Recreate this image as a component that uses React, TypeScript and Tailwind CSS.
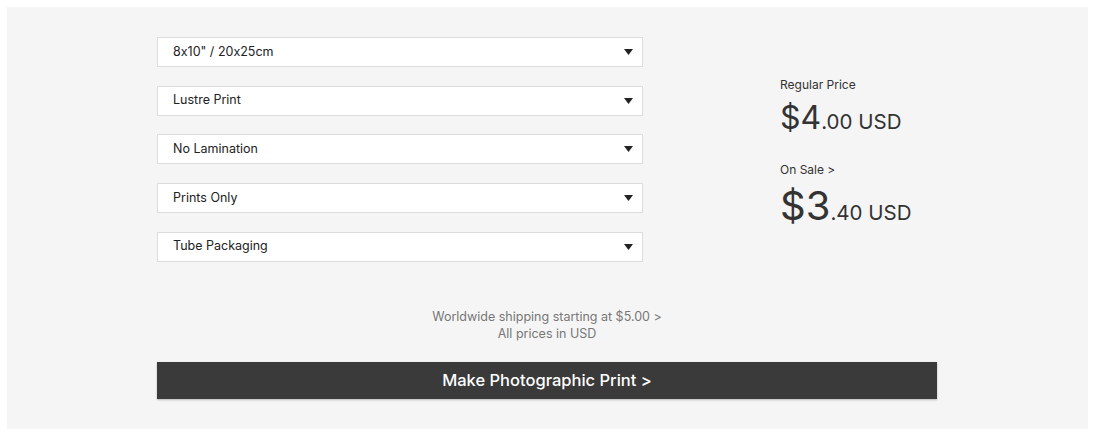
import React from 'react';

const OPTIONS = ['8x10" / 20x25cm', 'Lustre Print', 'No Lamination', 'Prints Only', 'Tube Packaging'];

const Caret: React.FC = () => (
  <svg width="9" height="6" viewBox="0 0 9 6" className="shrink-0">
    <path d="M0 0 H9 L4.5 6 Z" fill="#222" />
  </svg>
);

const SelectBox: React.FC<{ label: string }> = ({ label }) => (
  <div className="h-[30px] bg-white border border-[#dcdcdc] flex items-center justify-between pl-[15px] pr-[9px]">
    <span className="text-[12.5px] text-[#222]">{label}</span>
    <Caret />
  </div>
);

const App: React.FC = () => {
  return (
    <div
      className="bg-white p-[7px] w-[1095px] h-[434px] [font-feature-settings:'calt'_0]"
      style={{ fontFamily: 'Inter, "Noto Sans", sans-serif' }}
    >
      <div className="bg-[#f5f5f5] h-[422px] pt-[30px] pl-[150px]">
        <div className="w-[780px]">
          <div className="flex">
            <div className="w-[486px] flex flex-col gap-[18.7px]">
              {OPTIONS.map(o => (
                <SelectBox key={o} label={o} />
              ))}
            </div>
            <div className="ml-[137px] pt-[40px] text-[#333]">
              <div className="text-[12px] leading-[16px]">Regular Price</div>
              <div className="mt-[9px] leading-none whitespace-nowrap">
                <span className="text-[32px]">$4</span>
                <span className="text-[20.5px]">.00 USD</span>
              </div>
              <div className="mt-[28px] text-[12px] leading-[16px]">On Sale &gt;</div>
              <div className="mt-[8px] leading-[40px] whitespace-nowrap">
                <span className="text-[40px]">$3</span>
                <span className="text-[20.5px]">.40 USD</span>
              </div>
            </div>
          </div>
          <div className="mt-[46px] text-center text-[12.5px] leading-[17px] text-[#777]">
            <div>Worldwide shipping starting at $5.00 &gt;</div>
            <div>All prices in USD</div>
          </div>
          <button className="mt-[20px] w-full h-[37px] bg-[#3a3a3a] text-white text-[16.5px] font-medium shadow-[0_1px_2px_rgba(0,0,0,0.25)]">
            Make Photographic Print &gt;
          </button>
        </div>
      </div>
    </div>
  );
};

export default App;
